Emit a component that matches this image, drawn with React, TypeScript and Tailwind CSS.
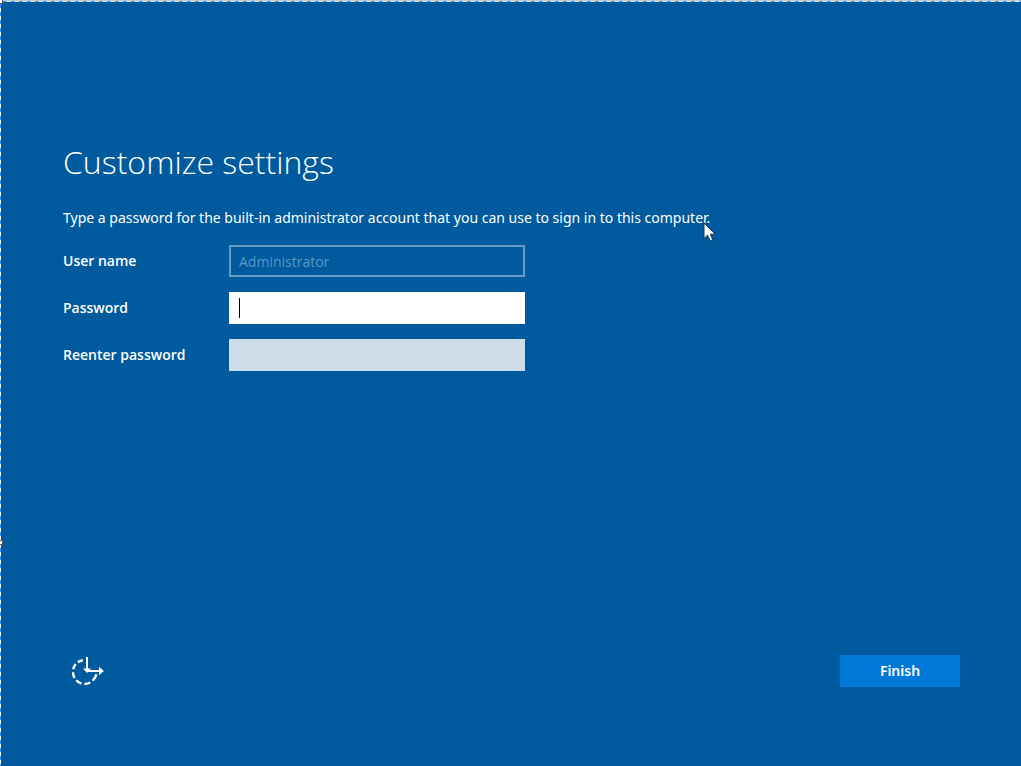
const fieldBase = "block h-8 w-full outline-none";

function EaseOfAccessIcon() {
  return (
    <svg
      viewBox="0 0 34 30"
      className="h-[30px] w-[34px]"
      fill="none"
      stroke="currentColor"
      strokeWidth="2.4"
    >
      <path d="M12.8 3.2A12 12 0 0 0 7.8 5.2" />
      <path d="M5.8 7A12 12 0 0 0 3.2 12.2" />
      <path d="M3 15.2A12 12 0 0 0 4.6 21" />
      <path d="M6.2 23.2A12 12 0 0 0 11.5 26.6" />
      <path d="M14.4 27A12 12 0 0 0 20.2 25.5" />
      <path d="M22.6 23.6A12 12 0 0 0 26.4 17.2" />
      <path d="M17 0v13" strokeWidth="2" />
      <path d="M13 11.5 17 16l4-4.5z" fill="currentColor" stroke="none" />
      <path d="M17 14h14" strokeWidth="2" />
      <path d="m29 9.8 4.8 4.2-4.8 4.2z" fill="currentColor" stroke="none" />
    </svg>
  );
}

function Cursor() {
  return (
    <svg viewBox="0 0 13 20" className="absolute top-[14px] -right-1.5 h-5 w-[13px]">
      <path
        d="M1 1v15.5l3.5-3.3 2.6 5.6 2.7-1.2-2.5-5.4h4.9z"
        fill="#fff"
        stroke="#17334f"
        strokeWidth="1"
      />
    </svg>
  );
}

export default function App() {
  return (
    <div className="relative flex min-h-screen flex-col bg-[#005a9e] pt-[140px] pr-[61px] pb-[79px] pl-[63px] font-['Noto_Sans','Open_Sans',sans-serif] text-sm text-white">
      {/* Dashed selection frame */}
      <div className="absolute inset-x-0 top-0 h-0.5 border-t border-[#c8ccd0] bg-[repeating-linear-gradient(90deg,#fff_0_3px,#3399ff_3px_7px,#fff_7px_8px)]" />
      <div className="absolute inset-y-0 left-0 w-px bg-[repeating-linear-gradient(180deg,#fff_0_4px,#3399ff_4px_8px)]" />
      <div className="absolute top-0 left-0 h-1 w-[3px] border-r border-b border-[#555] bg-white" />
      <div className="absolute top-[540px] left-0 h-[5px] w-[3px] border border-l-0 border-[#555] bg-white" />

      <main>
        <h1 className="font-['Open_Sans',sans-serif] text-[32px] leading-[44px] font-light">
          Customize settings
        </h1>
        <p className="relative mt-6 w-fit leading-5">
          Type a password for the built-in administrator account that you can use to sign in to this computer.
          <Cursor />
        </p>
        <form
          id="settings"
          className="mt-[17px] grid grid-cols-[166px_296px] items-center gap-y-[15px] font-['Open_Sans','Noto_Sans',sans-serif] font-semibold"
          onSubmit={(e) => e.preventDefault()}
        >
          <label htmlFor="user">User name</label>
          <input
            id="user"
            className={`${fieldBase} border-2 border-[#6699c5] bg-transparent px-2 font-normal text-[#5a96c4]`}
            defaultValue="Administrator"
            disabled
          />
          <label htmlFor="password">Password</label>
          <div className="relative">
            <input id="password" type="password" className={`${fieldBase} bg-white px-2.5 text-black`} />
            <span className="absolute top-1.5 left-2.5 h-5 w-px bg-black" />
          </div>
          <label htmlFor="confirm">Reenter password</label>
          <input id="confirm" type="password" className={`${fieldBase} bg-[#ccdce9] px-2.5 text-black`} />
        </form>
      </main>

      <footer className="mt-auto flex items-end justify-between">
        <button type="button" aria-label="Ease of access" className="ml-[7px]">
          <EaseOfAccessIcon />
        </button>
        <button type="submit" form="settings" className="h-8 w-[120px] bg-[#0078d7] font-semibold">
          Finish
        </button>
      </footer>
    </div>
  );
}
